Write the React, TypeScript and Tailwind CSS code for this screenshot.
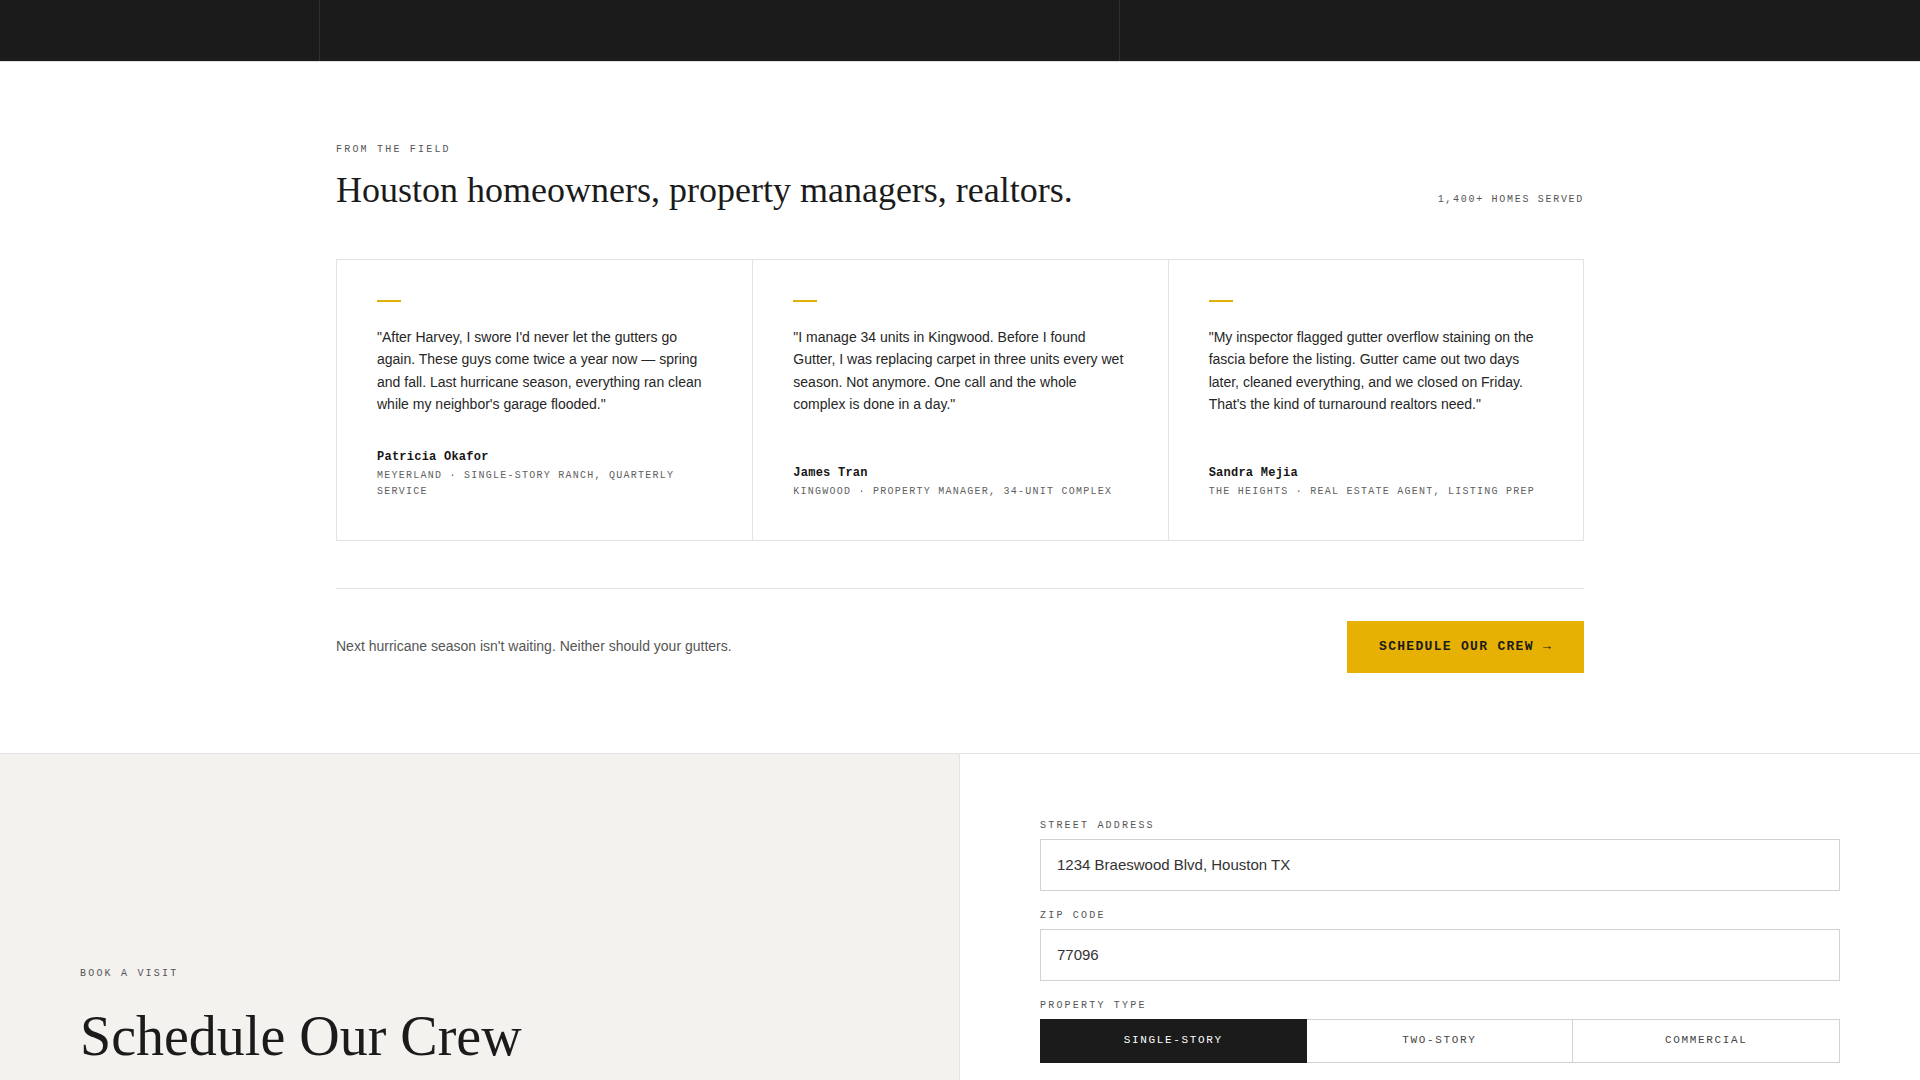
const serif = "font-['Liberation_Serif','Times_New_Roman',serif]";
const sans = "font-['Liberation_Sans',Arial,sans-serif]";
const mono = "font-['Liberation_Mono','Courier_New',monospace]";

type Review = {
  quote: string;
  name: string;
  meta: string;
};

const reviews: Review[] = [
  {
    quote:
      "\"After Harvey, I swore I'd never let the gutters go again. These guys come twice a year now — spring and fall. Last hurricane season, everything ran clean while my neighbor's garage flooded.\"",
    name: "Patricia Okafor",
    meta: "Meyerland · Single-story ranch, quarterly service"
  },
  {
    quote:
      "\"I manage 34 units in Kingwood. Before I found Gutter, I was replacing carpet in three units every wet season. Not anymore. One call and the whole complex is done in a day.\"",
    name: "James Tran",
    meta: "Kingwood · Property manager, 34-unit complex"
  },
  {
    quote:
      "\"My inspector flagged gutter overflow staining on the fascia before the listing. Gutter came out two days later, cleaned everything, and we closed on Friday. That's the kind of turnaround realtors need.\"",
    name: "Sandra Mejia",
    meta: "The Heights · Real estate agent, listing prep"
  }
];

function Eyebrow({ children, className = "" }: { children: string; className?: string }) {
  return (
    <p className={`${mono} text-[10px] uppercase leading-[15px] tracking-[0.22em] text-[#555] ${className}`}>{children}</p>
  );
}

function ReviewCard({ review, first }: { review: Review; first: boolean }) {
  return (
    <article className={`flex flex-col px-10 pt-10 pb-10 ${first ? "" : "border-l border-[#e3e3e3]"}`}>
      <span className="mb-6 block h-[2px] w-6 bg-[#e2b005]" />
      <p className={`${sans} text-[14px] leading-[22.4px] text-[#262626]`}>{review.quote}</p>
      <div className="mt-auto pt-8">
        <p className={`${mono} mb-0.5 text-[12px] font-bold leading-[18px] tracking-[0.02em] text-[#161616]`}>{review.name}</p>
        <p className={`${mono} text-[10px] uppercase leading-[16px] tracking-[0.125em] text-[#606060]`}>{review.meta}</p>
      </div>
    </article>
  );
}

function Field({ label, value }: { label: string; value: string }) {
  return (
    <label className="block">
      <Eyebrow className="mb-1.5">{label}</Eyebrow>
      <input
        defaultValue={value}
        className={`${sans} block h-[52px] w-full border border-[#d2d2d2] bg-white px-4 text-[15px] text-[#333] outline-none`}
      />
    </label>
  );
}

const propertyTypes = ["Single-story", "Two-story", "Commercial"];

export default function App() {
  return (
    <div className="min-h-screen bg-white text-[#1b1b1b]">
      {/* top bar */}
      <header className="flex h-[62px] border-b border-[#dedede] bg-[#1b1b1b]">
        <div className="w-[319px]" />
        <div className="w-[800px] border-l border-[#2f2f2f]" />
        <div className="flex-1 border-l border-[#2f2f2f]" />
      </header>

      {/* testimonials */}
      <section className="mx-auto max-w-[1248px] pt-20 pb-20">
        <Eyebrow className="mb-3">From the field</Eyebrow>
        <div className="flex items-baseline justify-between">
          <h2 className={`${serif} text-[36px] leading-[43px] text-[#1b1b1b]`}>
            Houston homeowners, property managers, realtors.
          </h2>
          <p className={`${mono} text-[10px] uppercase tracking-[0.17em] text-[#555]`}>1,400+ homes served</p>
        </div>

        <div className="mt-[47px] grid grid-cols-3 border border-[#e3e3e3]">
          {reviews.map((r, i) => (
            <ReviewCard key={r.name} review={r} first={i === 0} />
          ))}
        </div>

        <div className="mt-[47px] flex items-center justify-between border-t border-[#e3e3e3] pt-8">
          <p className={`${sans} text-[14px] text-[#555]`}>Next hurricane season isn't waiting. Neither should your gutters.</p>
          <button
            type="button"
            className={`${mono} bg-[#e6b102] px-8 py-4 text-[13px] font-bold uppercase leading-[20px] tracking-[0.1em] text-[#1b1b1b]`}
          >
            Schedule our crew →
          </button>
        </div>
      </section>

      {/* booking */}
      <section className="grid grid-cols-2 border-t border-[#e3e3e3]">
        <div className="border-r border-[#e3e3e3] bg-[#f3f2ee] px-20 pt-[212px] pb-20">
          <p className={`${mono} mb-6 text-[10px] uppercase leading-[15px] tracking-[0.22em] text-[#555]`}>Book a visit</p>
          <h2 className={`${serif} text-[56px] leading-[62px] text-[#1b1b1b]`}>Schedule Our Crew</h2>
          <p className={`${sans} mt-6 max-w-[460px] text-[15px] leading-[24px] text-[#555]`}>
            Tell us where you are and what kind of roof we're working with. We'll confirm a window within one business day.
          </p>
        </div>

        <form className="flex flex-col gap-[17px] px-20 pt-16 pb-20">
          <Field label="Street address" value="1234 Braeswood Blvd, Houston TX" />
          <Field label="Zip code" value="77096" />
          <div>
            <Eyebrow className="mb-1.5">Property type</Eyebrow>
            <div className="grid grid-cols-3">
              {propertyTypes.map((t, i) => (
                <button
                  key={t}
                  type="button"
                  className={`${mono} h-[44px] text-[11px] uppercase tracking-[0.15em] ${
                    i === 0
                      ? "border border-[#1b1b1b] bg-[#1b1b1b] text-white"
                      : "border border-l-0 border-[#d2d2d2] bg-white text-[#444]"
                  }`}
                >
                  {t}
                </button>
              ))}
            </div>
          </div>
          <button
            type="button"
            className={`${mono} mt-4 h-[52px] bg-[#1b1b1b] text-[13px] font-bold uppercase tracking-[0.1em] text-white`}
          >
            Request a visit →
          </button>
        </form>
      </section>
    </div>
  );
}
